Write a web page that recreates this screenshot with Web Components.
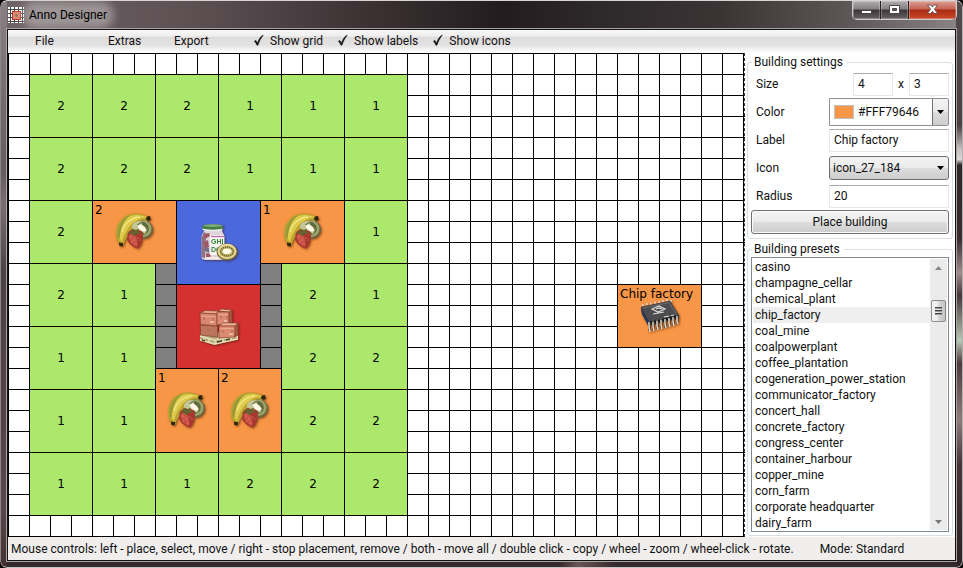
<!DOCTYPE html>
<html lang="en">
<head>
<meta charset="utf-8">
<title>Anno Designer</title>
<style>
  html, body { margin: 0; height: 100%; background: #0a0607; }
  body { font: 12px/16px Roboto, "Open Sans", sans-serif; color: #111; }
</style>
</head>
<body>
<anno-window></anno-window>

<template id="t-window">
  <style>
    :host { display: flex; flex-direction: column; box-sizing: border-box; height: 100vh; padding: 0 6px 6px;
      border: 1px solid #c9c4c6; border-color: #d8d4d6 #b5afb1 #c9c4c6 #8d8688; border-radius: 7px; outline: 1px solid #0a0607; outline-offset: 0;
      background:
        linear-gradient(180deg, #51494a 0, #4b4142 22%, #c3bdbe 26%, #dcd8d8 28%, #2e2728 29%, #3a2c2e 42%, #a08d8c 48%, #463638 52%, #b7c8b5 60%, #4e3a3b 64%, #917b7b 74%, #473437 82%, #2d2223 100%) right / 6px 100% no-repeat,
        linear-gradient(180deg, #8b8183 0, #665b5e 30%, #7a6e71 36%, #4c4245 48%, #544146 70%, #5a474d 90%, #43302f 100%) left / 6px 100% no-repeat,
        linear-gradient(100deg, transparent 58%, #6a5456 60%, transparent 64%) bottom / 100% 6px no-repeat,
        linear-gradient(90deg, #6e6366 0, #5c5053 20%, #3c3234 38%, #231c1e 52%, #2d2829 62%, #3a3435 75%, #5c5657 88%, #8a8486 100%) top / 100% 28px no-repeat,
        #33282a; }
    .client { flex: 1; min-height: 0; display: flex; flex-direction: column; border: 1px solid #111; outline: 1px solid #a9a3a5; background: #fff; }
    .work { flex: 1; min-height: 0; display: flex; }
    building-map { flex: 1; min-width: 0; }
    side-panel { flex: none; width: 210px; }
  </style>
  <title-bar caption="Anno Designer"></title-bar>
  <div class="client">
    <menu-bar></menu-bar>
    <div class="work"><building-map></building-map><side-panel></side-panel></div>
    <status-bar><span>Mouse controls: left - place, select, move / right - stop placement, remove / both - move all / double click - copy / wheel - zoom / wheel-click - rotate.</span><span>Mode: Standard</span></status-bar>
  </div>
</template>

<template id="t-title">
  <style>
    :host { display: flex; align-items: flex-start; height: 28px; flex: none; }
    .app { margin: 6px 0 0 1px; flex: none; }
    h1 { margin: 6px 0 0 5px; font: inherit; flex: 1; color: #000; }
    h1 span { border-radius: 8px; background: rgba(220,214,216,.45); box-shadow: 0 0 8px 7px rgba(220,214,216,.45); }
    .controls { display: flex; height: 18px; margin-right: -1px; border: 1px solid #d0cccd; border-top: 0; border-radius: 0 0 5px 5px; overflow: hidden; background: #262022; gap: 1px; }
    button { border: 0; padding: 0; width: 27px; background: linear-gradient(#b0acae 0, #858082 45%, #3b3537 50%, #696264 100%); display: flex; align-items: center; justify-content: center; box-shadow: inset 0 0 0 1px rgba(255,255,255,.25); }
    .close { width: 47px; background: linear-gradient(#dba096 0, #c46252 45%, #a92a14 50%, #cc4a28 100%); }
  </style>
  <svg class="app" width="16" height="16" viewBox="0 0 16 16" shape-rendering="crispEdges" aria-hidden="true">
    <rect width="16" height="16" fill="#fff"/>
    <path d="M2 0h1v16h-1zM6 0h1v16h-1zM10 0h1v16h-1zM14 0h1v16h-1zM0 2h16v1h-16zM0 6h16v1h-16zM0 10h16v1h-16zM0 14h16v1h-16z" fill="#444"/>
    <rect x="4" y="4" width="9" height="9" fill="#c6332b"/><rect x="5" y="5" width="7" height="7" fill="#cf8a70"/><path d="M7 8h3v1h-3zM8 7h1v3h-1z" fill="#a4644e"/>
  </svg>
  <h1><span></span></h1>
  <div class="controls">
    <button aria-label="Minimize"><svg width="13" height="12"><rect x="1.500" y="6.500" width="10" height="3" fill="#fff" stroke="#4a4648"/></svg></button>
    <button aria-label="Maximize"><svg width="13" height="12"><path fill-rule="evenodd" d="M1.500 1.500h10v8h-10zM4.500 4.500v2h4v-2z" fill="#fff" stroke="#4a4648"/></svg></button>
    <button class="close" aria-label="Close"><svg width="13" height="12"><path d="M1.500 1h3.300l1.700 2 1.700-2h3.300L8.400 5.300l3.300 4.200H8.300L6.500 7.400 4.700 9.500H1.300l3.300-4.200z" fill="#fff" stroke="#5a3a3c" stroke-width=".8"/></svg></button>
  </div>
</template>

<template id="t-menu">
  <style>
    :host { display: flex; align-items: center; box-sizing: border-box; height: 23px; flex: none; padding: 0 0 2px 27px; background: linear-gradient(#f8f8f8 0, #efeeee 26%, #dedcdb 32%, #e3e1e1 65%, #f8f8f8 90%, #fff 100%); }
    nav { display: flex; }
    button { border: 0; background: none; padding: 0; font: inherit; color: inherit; text-align: left; }
    .file { width: 73px; } .extras { width: 66px; } .export { width: 79px; }
    .checks { display: flex; gap: 14px; }
  </style>
  <nav><button class="file">File</button><button class="extras">Extras</button><button class="export">Export</button></nav>
  <div class="checks"><check-item>Show grid</check-item><check-item>Show labels</check-item><check-item>Show icons</check-item></div>
</template>

<template id="t-check">
  <style>
    :host { display: block; }
    label { display: flex; align-items: center; gap: 5px; }
    .box { position: relative; width: 12px; height: 16px; flex: none; }
    input { appearance: none; margin: 0; width: 12px; height: 16px; display: block; }
    svg { position: absolute; left: 1px; top: 2px; display: none; pointer-events: none; }
    input:checked + svg { display: block; }
  </style>
  <label><span class="box"><input type="checkbox" checked><svg width="10" height="11" viewBox="0 0 10 11"><path d="M.3 6.300l1.500-1 1.700 2.600C4.600 4.500 6.500 1.700 8.600.3h.7C7 3 5.300 6.500 4 10.300H2.900C2.200 8.500 1.400 7.200.3 6.300z" fill="#111" stroke="#111" stroke-width=".4"/></svg></span><slot></slot></label>
</template>

<template id="t-map">
  <style>
    :host { display: grid; grid-template-columns: repeat(auto-fill, 21px); grid-auto-rows: 21px; overflow: hidden; box-sizing: border-box; border-right: 1px dashed #333;
      background: linear-gradient(90deg, #000 1px, transparent 1px) 0 0 / 21px 21px, linear-gradient(#000 1px, transparent 1px) 0 0 / 21px 21px, #fff; }
  </style>
</template>

<template id="t-building">
  <style>
    :host { display: grid; grid-template: 100% / 100%; margin: 0 -1px -1px 0; border: 1px solid #000; background: var(--fill); font: 12px/16px "DejaVu Sans", sans-serif; color: #000; }
    .label { grid-area: 1 / 1; place-self: center; }
    :host([icon]) .label { place-self: start; padding: 1px 0 0 2px; white-space: nowrap; }
    svg { grid-area: 1 / 1; place-self: center; filter: drop-shadow(1px 1px 1px rgba(60,20,0,.55)); }
  </style>
  <slot name="icon"></slot><span class="label"></span>
</template>

<template id="t-side">
  <style>
    :host { display: flex; flex-direction: column; gap: 2px; box-sizing: border-box; padding: 1px 2px; background: #fff; }
    .form { display: grid; grid-template-columns: 78px minmax(0,1fr); grid-auto-rows: 28px; align-items: center; padding: 0 3px; }
    .form label { padding-left: 5px; }
    input { box-sizing: border-box; width: 100%; height: 23px; border: 1px solid #e3e9ef; border-top-color: #abadb3; border-radius: 1px; padding: 0 4px; font: inherit; color: inherit; background: #fff; outline: 0; }
    .size { display: grid; grid-template-columns: 40px 16px 40px; justify-content: end; text-align: center; align-items: center; }
    .button { grid-column: 1 / -1; align-self: start; height: 24px; padding: 0; font: inherit; color: inherit; border: 1px solid #707070; border-radius: 3px; background: linear-gradient(#f3f3f3 0, #ebebeb 50%, #dddddd 50%, #cdcdcd 100%); box-shadow: inset 0 0 0 1px #fafafa; margin: 0; }
    .combo { display: flex; position: relative; box-sizing: border-box; height: 24px; border: 1px solid #707070; border-radius: 3px; background: linear-gradient(#f3f3f3 0, #ebebeb 50%, #dddddd 50%, #cdcdcd 100%); }
    .combo select { appearance: none; flex: 1; min-width: 0; border: 0; outline: 0; background: none; font: inherit; color: inherit; padding: 0 18px 0 3px; }
    .combo svg { position: absolute; right: 4px; top: 9px; pointer-events: none; }
    .color { height: 28px; border-radius: 0 2px 2px 0; border-color: #8a8f9a; background: #fff; align-items: stretch; }
    .color select { padding-left: 4px; }
    .swatch { align-self: center; width: 18px; height: 12px; border: 1px solid #c0c0c0; margin-left: 4px; background: #f79646; }
    .arrow { width: 15px; border-left: 1px solid #707070; background: linear-gradient(#f3f3f3 0, #ebebeb 50%, #dddddd 50%, #cdcdcd 100%); position: absolute; right: 0; top: 0; bottom: 0; pointer-events: none; }
    .arrow svg { top: 11px; right: 4px; }
    .presets { flex: 1; min-height: 0; }
    preset-list { flex: 1; min-height: 0; margin: 0 3px 3px; }
  </style>
  <group-box caption="Building settings">
    <div class="form">
      <label for="w">Size</label><div class="size"><input id="w" value="4" aria-label="Width"><span>x</span><input id="h" value="3" aria-label="Height"></div>
      <label for="color">Color</label><div class="combo color"><span class="swatch"></span><select id="color"><option>#FFF79646</option></select><span class="arrow"><svg width="7" height="4"><path d="M0 0h7L3.500 4z"/></svg></span></div>
      <label for="label">Label</label><input id="label" value="Chip factory">
      <label for="icon">Icon</label><div class="combo"><select id="icon"><option>icon_27_184</option></select><svg width="7" height="4"><path d="M0 0h7L3.500 4z"/></svg></div>
      <label for="radius">Radius</label><input id="radius" value="20">
      <button class="button">Place building</button>
    </div>
  </group-box>
  <group-box class="presets" caption="Building presets"><preset-list></preset-list></group-box>
</template>

<template id="t-group">
  <style>
    :host { display: flex; flex-direction: column; }
    fieldset { flex: 1; min-height: 0; min-width: 0; box-sizing: border-box; margin: 0; padding: 0; border: 1px solid #d5dfe5; border-radius: 3px; display: flex; flex-direction: column; }
    legend { margin-left: 4px; padding: 0 4px 0 2px; }
  </style>
  <fieldset><legend></legend><slot></slot></fieldset>
</template>

<template id="t-presets">
  <style>
    :host { display: flex; box-sizing: border-box; border: 1px solid #828790; padding: 1px; background: #fff; }
    select { flex: 1; min-width: 0; border: 0; outline: 0; padding: 0; margin: 0; background: #fff; font: inherit; color: inherit; overflow: hidden; scrollbar-width: none; border-radius: 0; }
    option { box-sizing: border-box; height: 16px; min-height: 16px; padding: 1px 2px; color: #111; }
    option:checked { background: linear-gradient(#efefef, #efefef); color: #111; }
    .bar { width: 17px; flex: none; display: flex; flex-direction: column; align-items: center; background: #ebebeb; }
    button { border: 0; padding: 0; width: 17px; height: 17px; background: none; display: flex; align-items: center; justify-content: center; }
    .track { flex: 1; display: flex; flex-direction: column; }
    .before { flex: 24; } .after { flex: 191; }
    .thumb { box-sizing: border-box; height: 22px; width: 15px; border: 1px solid #8c8c8c; border-radius: 2px; background: linear-gradient(90deg, #f5f5f5 0, #e9e9e9 48%, #d5d5d5 52%, #c4c4c4 100%); display: flex; align-items: center; justify-content: center; }
  </style>
  <select size="17" aria-label="Building presets"></select>
  <div class="bar">
    <button aria-label="Scroll up"><svg width="7" height="4"><path d="M0 4h7L3.500 0z" fill="#888"/></svg></button>
    <div class="track"><div class="before"></div><div class="thumb"><svg width="7" height="9"><path d="M0 .5h7M0 3.500h7M0 6.500h7" stroke="#444" stroke-width="1"/><path d="M0 1.500h7M0 4.500h7M0 7.500h7" stroke="#999"/></svg></div><div class="after"></div></div>
    <button aria-label="Scroll down"><svg width="7" height="4"><path d="M0 0h7L3.500 4z" fill="#777"/></svg></button>
  </div>
</template>

<template id="t-status">
  <style>
    :host { display: flex; gap: 26px; align-items: center; height: 23px; flex: none; padding: 0 3px; background: #f0eded; white-space: nowrap; overflow: hidden; }
  </style>
  <slot></slot>
</template>

<template id="i-fruit">
  <svg width="42" height="42" viewBox="0 0 42 42">
    <path d="M2.500 29C-1 13 9 2 22 2.500c5 .2 9 1.500 11 3l2-.5 1.500 3.500-3 1.500C26 10 21 13 18 19c-3 5-6 8-8 13l-1 3-3.700-.6-.3-2.400z" fill="#bda52f"/>
    <path d="M4 26C3 13 11 4 23 4c4 0 8 1.200 10 2.600C26 7 20 10 16 15 12 20 9 25 8 31z" fill="#decb4c"/>
    <path d="M3.500 27C2 14 9 6 17 4 9 10 6.500 17 5.500 28z" fill="#9a9838"/>
    <path d="M8 21C10 13 16 7.500 26 5.800" fill="none" stroke="#f0e580" stroke-width="1.600"/>
    <path d="M33 5.500l3-.5.800 4-3 1-2-2zM5 31.500l4.300.8-.8 3.500-3.300-1z" fill="#30260f"/>
    <ellipse cx="30" cy="18.500" rx="9" ry="9.300" transform="rotate(-28 30 18.500)" fill="#6c6640"/>
    <ellipse cx="29.500" cy="17.800" rx="8" ry="8.200" fill="#9aa46b"/>
    <ellipse cx="28.500" cy="17.500" rx="6.300" ry="6.500" fill="#5f6b3a"/>
    <path d="M18 15c1-4 5-5.500 9-4.500l-5 4 0 4-4-1z" fill="#c3c69a"/>
    <path d="M22 14l4 0 1-3 2 4 4 4-2 4-4-3-5 1-2-2z" fill="#c2c795"/>
    <ellipse cx="28" cy="17" rx="4.600" ry="2.600" transform="rotate(38 28 17)" fill="#fff9e6"/>
    <path d="M13.500 23c1-4 5-5 9-4 5 0 7 2.500 6.500 7-.4 5-2.500 10-5 11.500C20 37 15 33 13.300 29z" fill="#a9362f"/>
    <path d="M14.500 25c2-3 5-2 7 0 2 3 2 8 1.500 11-3-1-8-5-8.500-11z" fill="#cc5248"/>
    <path d="M13 23l5-3-1-2 4 1.500 4-2-1 3 4 2-5 0-3 3-2-3z" fill="#61652e"/>
    <g fill="#e8a283"><circle cx="17" cy="26" r=".6"/><circle cx="20" cy="29" r=".6"/><circle cx="24" cy="27" r=".6"/><circle cx="17.500" cy="31" r=".6"/><circle cx="22" cy="33" r=".6"/><circle cx="26" cy="29" r=".5"/></g>
  </svg>
</template>
<template id="i-jar">
  <svg width="42" height="42" viewBox="0 0 42 42">
    <path d="M6 8h18c0 3 2.500 4 2.500 7v20c0 2-2 3-4 3H8c-3 0-4.500-1-4.500-4V16C3.500 12 6 11 6 8z" fill="#ded5dd"/>
    <path d="M6 10c2 1 3 2 2 5l-1 21C4 36 3.500 35 3.500 33V16z" fill="#8e7186"/>
    <path d="M6 12l5-1 1 3-5 3zM6 20l4-2 1 7-4 2zM8 31l5 1-1 4-4-1z" fill="#a15863"/>
    <path d="M7 25l4 1v5l-4-2z" fill="#776e89"/>
    <rect x="12" y="13" width="14" height="20" fill="#f8f4f1"/>
    <path d="M13 14.500h13" stroke="#bc6ab0" stroke-width="1.300"/>
    <text x="13" y="22" font-family="Liberation Sans, sans-serif" font-size="7" font-weight="700" fill="#36853c">GHI</text>
    <text x="13" y="30" font-family="Liberation Sans, sans-serif" font-size="7" font-weight="700" fill="#36853c">DG</text>
    <path d="M7 36h16" stroke="#f5e8e4" stroke-width="2"/>
    <ellipse cx="14.500" cy="7" rx="10.500" ry="2.200" fill="#eee"/>
    <path d="M4.500 3.500C9 1.700 20 1.700 25 3.500v3C21 8 8 8 4.500 6.500z" fill="#477e48"/>
    <ellipse cx="14.800" cy="3.600" rx="9.500" ry="1.300" fill="#83ae79"/>
    <ellipse cx="29" cy="30" rx="10.500" ry="8.500" fill="#796b34"/>
    <ellipse cx="29" cy="29.300" rx="9.500" ry="7.600" fill="#e6da9c"/>
    <ellipse cx="29" cy="29.500" rx="7.500" ry="5.700" fill="#b8ac5c"/>
    <ellipse cx="29" cy="29.500" rx="6.300" ry="4.500" fill="none" stroke="#5b522c" stroke-width="1.300" stroke-dasharray="1 1.100"/>
    <ellipse cx="29" cy="29.300" rx="4.500" ry="2.800" fill="#fffbea"/>
  </svg>
</template>
<template id="i-boxes">
  <svg width="42" height="42" viewBox="0 0 42 42">
    <path d="M2 29l20-3 18 4v3l-23 6-15-5z" fill="#b5aa7e"/>
    <path d="M2 30l14 4 24-4M2 34l14 4 24-5M6 31v4M11 33v4M17 34v4M25 33v4M33 31v4M39 30v3" stroke="#e7dfb9" stroke-width="1.400" fill="none"/>
    <path d="M4 34l3 1M19 36l5-1M28 34l4-1" stroke="#504324" stroke-width="1.500"/>
    <g stroke="#8a4231" stroke-width=".7" stroke-linejoin="round">
      <path d="M2.500 19l17 1v11l-17-2z" fill="#bd765b"/>
      <path d="M2 7l5-2.500L20 5l-1 3z" fill="#eaaa91"/><path d="M2 7l17 1v12L2.500 18.500z" fill="#d88770"/>
      <path d="M19 5l5-2 10 1-3 2z" fill="#efb39c"/><path d="M19 6l12 0v12l-12 1z" fill="#dd8b72"/><path d="M31 6l3-2v12l-3 2z" fill="#a9583f"/>
      <path d="M21 20l4-3h15l-3 3z" fill="#f2b59c"/><path d="M21 20h16v11l-16 1z" fill="#dc8b70"/><path d="M37 20l3-3v12l-3 2z" fill="#a75c42"/>
    </g>
    <path d="M3 10l15 1M20 8.500h10M22 22.500h14" stroke="#edb099" stroke-width=".8"/>
    <path d="M6 14v-3M15 15v-3M23 13v-3M29 13v-3M10 25v-3M25 27v-3M34 27v-3" stroke="#a15643" stroke-width=".7"/>
    <path d="M12 16h4M26 15h3M31 28h4" stroke="#fbe9d6" stroke-width="1.200"/>
  </svg>
</template>
<template id="i-chip">
  <svg width="42" height="42" viewBox="0 0 42 42">
    <path d="M4 11v-2M8 10v-2M12 9.500v-2M16 8.500v-2M20 8v-2M24 7v-2M28 6v-2M32 7v-2" stroke="#d8d8cf" stroke-width="1.600"/>
    <path d="M2 12l29-6 9 14.500v3L9.500 31 3 19z" fill="#252938"/>
    <path d="M2 12l29-6 9 14.500L10 27z" fill="#4c4b4e"/>
    <path d="M2 12l8 15-.5 4L3 19z" fill="#28365d"/>
    <path d="M4 13l26-5.300L38 20" fill="none" stroke="#747477" stroke-width=".8"/>
    <path d="M13 14l7-3 6 3-7 3zM17 14l3-1 3 1M14 19l11-2M25 22l5-1M32 20.500l3-.5" fill="none" stroke="#d9d9d6" stroke-width="1.200"/>
    <path d="M10 28l29-6.500" stroke="#17171b" stroke-width="2"/>
    <path d="M10.500 28v8M14.500 27.500v8M18.500 26.500v8M22.500 25.500v8M26.500 25v8M30.500 24v7.500M34.500 23v7.500M38.500 22v7" stroke="#5a432f" stroke-width="2.400"/>
    <path d="M10 27v5l1 5M14 26.500v5l1 4.500M18 25.500v5l1 4.500M22 24.500v5l1 4.500M26 24v5l1 4M30 23v5l1 4M34 22v5l1 4M38 21v5l1 3" fill="none" stroke="#e2ded0" stroke-width="1.400"/>
  </svg>
</template>

<script>
const stamp = (el, id) => {
  const root = el.attachShadow({ mode: "open" });
  root.append(document.getElementById(id).content.cloneNode(true));
  return root;
};
const simple = (name, id) => customElements.define(name, class extends HTMLElement {
  constructor() { super(); stamp(this, id); }
});

const FILL = { green: "#ace86c", orange: "#f79646", blue: "#4b69dd", red: "#d63131", gray: "#808080" };
/* column, row, width, height (in cells), fill, label, icon */
const BUILDINGS = [
  ...["2","2","2","1","1","1"].map((t, i) => [1 + 3 * i, 1, 3, 3, "green", t]),
  ...["2","2","2","1","1","1"].map((t, i) => [1 + 3 * i, 4, 3, 3, "green", t]),
  [1, 7, 3, 3, "green", "2"], [16, 7, 3, 3, "green", "1"],
  [1, 10, 3, 3, "green", "2"], [4, 10, 3, 3, "green", "1"], [13, 10, 3, 3, "green", "2"], [16, 10, 3, 3, "green", "1"],
  [1, 13, 3, 3, "green", "1"], [4, 13, 3, 3, "green", "1"], [13, 13, 3, 3, "green", "2"], [16, 13, 3, 3, "green", "2"],
  [1, 16, 3, 3, "green", "1"], [4, 16, 3, 3, "green", "1"], [13, 16, 3, 3, "green", "2"], [16, 16, 3, 3, "green", "2"],
  ...["1","1","1","2","2","2"].map((t, i) => [1 + 3 * i, 19, 3, 3, "green", t]),
  ...[0,1,2,3,4].flatMap(i => [[7, 10 + i, 1, 1, "gray", ""], [12, 10 + i, 1, 1, "gray", ""]]),
  [4, 7, 4, 3, "orange", "2", "fruit"], [12, 7, 4, 3, "orange", "1", "fruit"],
  [8, 7, 4, 4, "blue", "", "jar"], [8, 11, 4, 4, "red", "", "boxes"],
  [7, 15, 3, 4, "orange", "1", "fruit"], [10, 15, 3, 4, "orange", "2", "fruit"],
  [29, 11, 4, 3, "orange", "Chip factory", "chip"],
];
const PRESETS = ["casino","champagne_cellar","chemical_plant","chip_factory","coal_mine","coalpowerplant","coffee_plantation","cogeneration_power_station","communicator_factory","concert_hall","concrete_factory","congress_center","container_harbour","copper_mine","corn_farm","corporate headquarter","dairy_farm"];

customElements.define("map-building", class extends HTMLElement {
  connectedCallback() {
    if (this.shadowRoot) return;
    const root = stamp(this, "t-building");
    root.querySelector(".label").textContent = this.getAttribute("label");
    const icon = this.getAttribute("icon");
    const slot = root.querySelector("slot");
    if (icon) slot.replaceWith(document.getElementById("i-" + icon).content.cloneNode(true));
    else slot.remove();
  }
});
customElements.define("building-map", class extends HTMLElement {
  constructor() {
    super();
    const root = stamp(this, "t-map");
    for (const [x, y, w, h, fill, label, icon] of BUILDINGS) {
      const b = document.createElement("map-building");
      b.setAttribute("label", label);
      if (icon) b.setAttribute("icon", icon);
      b.style.gridArea = `${y + 1} / ${x + 1} / span ${h} / span ${w}`;
      b.style.setProperty("--fill", FILL[fill]);
      root.append(b);
    }
  }
});
customElements.define("title-bar", class extends HTMLElement {
  constructor() { super(); stamp(this, "t-title"); }
  connectedCallback() { this.shadowRoot.querySelector("h1 span").textContent = this.getAttribute("caption"); }
});
customElements.define("group-box", class extends HTMLElement {
  constructor() { super(); stamp(this, "t-group"); }
  connectedCallback() { this.shadowRoot.querySelector("legend").textContent = this.getAttribute("caption"); }
});
customElements.define("preset-list", class extends HTMLElement {
  constructor() {
    super();
    const list = stamp(this, "t-presets").querySelector("select");
    for (const p of PRESETS) list.add(new Option(p, p, p === "chip_factory", p === "chip_factory"));
  }
});
simple("check-item", "t-check");
simple("menu-bar", "t-menu");
simple("side-panel", "t-side");
simple("status-bar", "t-status");
simple("anno-window", "t-window");
</script>
</body>
</html>
